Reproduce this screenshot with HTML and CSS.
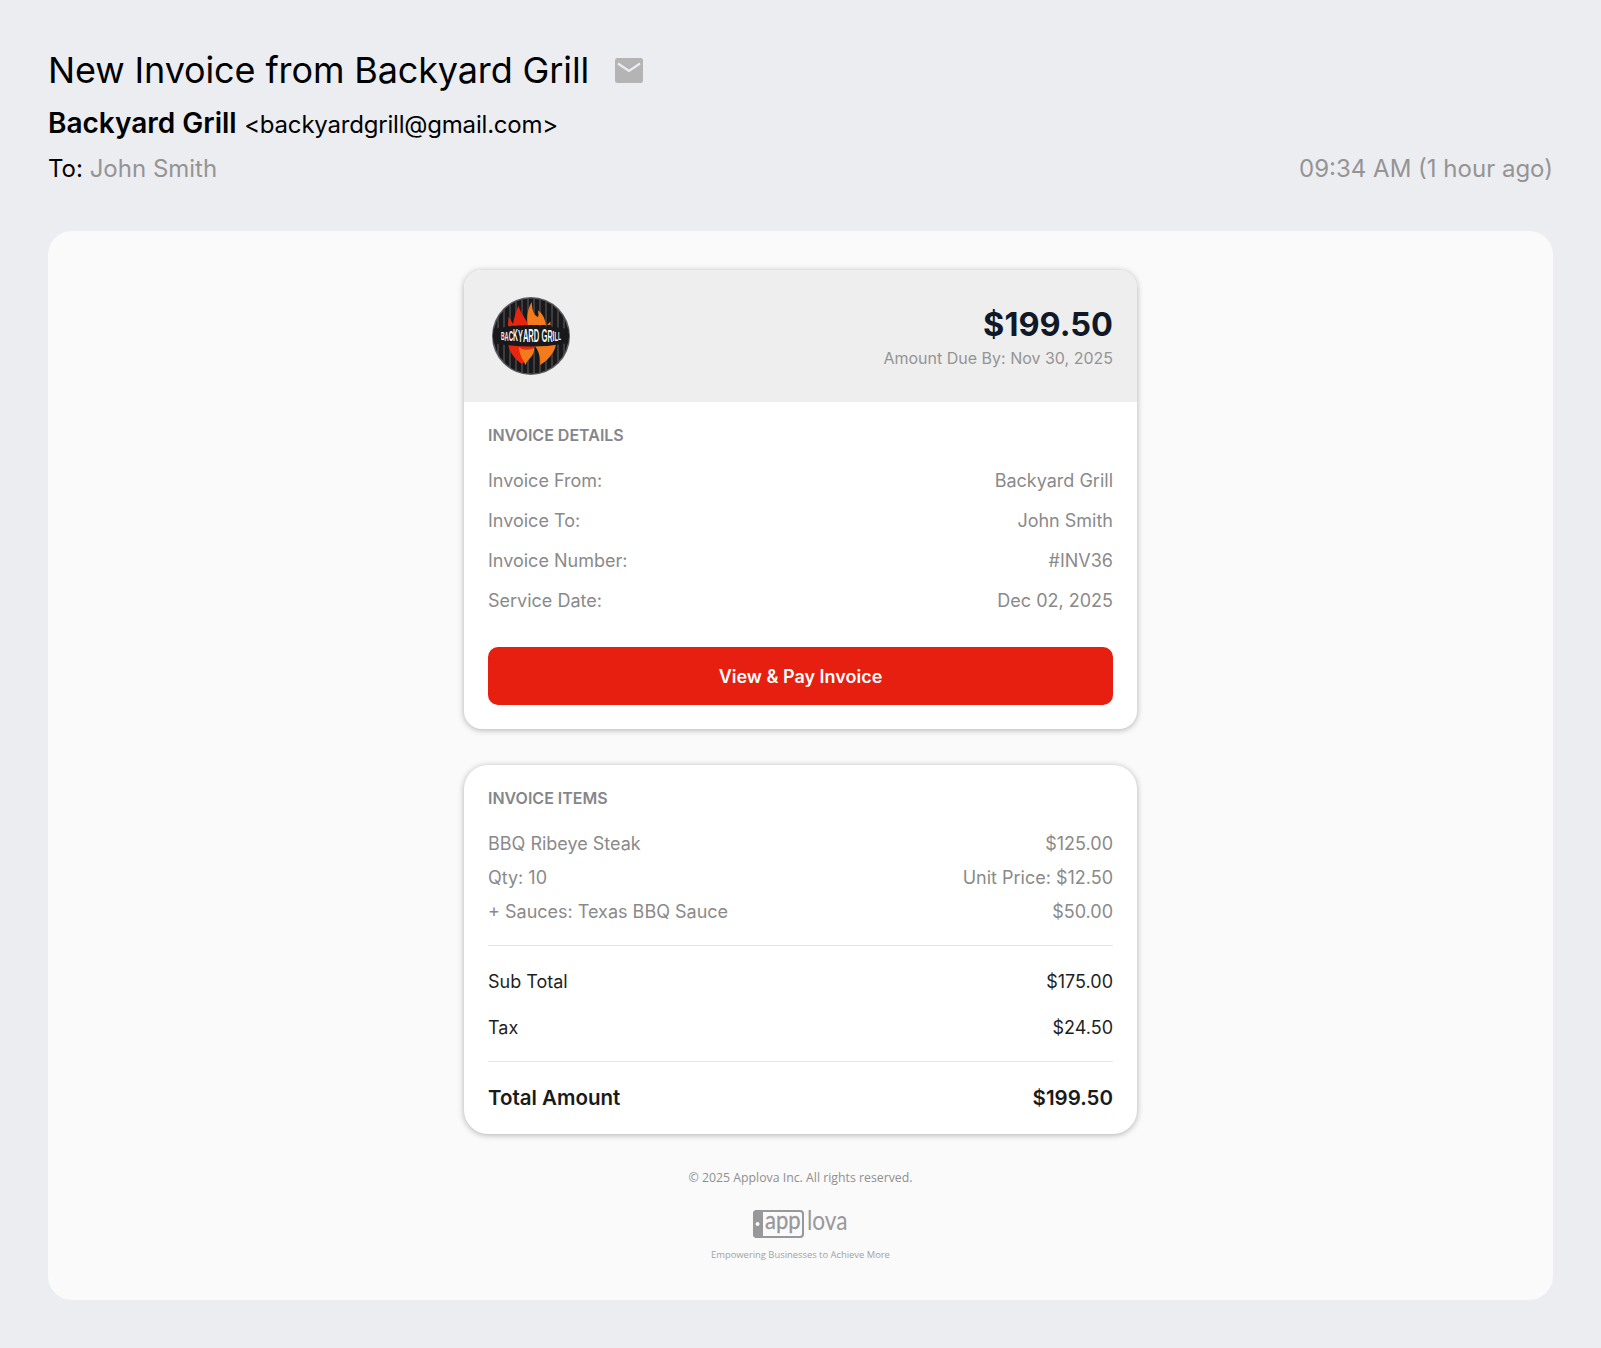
FILE: index.html
```html
<!DOCTYPE html>
<html lang="en">
<head>
  <meta charset="UTF-8">
  <title>New Invoice from Backyard Grill</title>
  <meta name="viewport" content="width=device-width, initial-scale=1.0">
  <link rel="stylesheet" href="styles.css">
</head>
<body>
<div class="mail-head">
  <div class="subject">
    <h1>New Invoice from Backyard Grill</h1>
    <svg class="mail-icon" width="28" height="25" viewBox="0 0 28 25">
      <rect width="28" height="25" rx="2.5" fill="#b4b4b4"/>
      <path d="M3 5.5 L14 13 L25 5.5" fill="none" stroke="#ecedf1" stroke-width="2.2"/>
    </svg>
  </div>
  <div class="sender"><b>Backyard Grill</b> <span>&lt;backyardgrill@gmail.com&gt;</span></div>
  <div class="to-row">
    <div>To: <span class="muted">John Smith</span></div>
    <div class="muted">09:34 AM (1 hour ago)</div>
  </div>
</div>

<div class="panel">
  <div class="card">
    <div class="card-top">
      <svg class="logo" width="80" height="80" viewBox="0 0 80 80">
        <defs><clipPath id="disc"><circle cx="40" cy="40" r="38"/></clipPath></defs>
        <circle cx="40" cy="40" r="39" fill="#5c5c60"/>
        <circle cx="40" cy="40" r="37.5" fill="#19191c"/>
        <g clip-path="url(#disc)">
          <path class="grill" d="M7 0V80M13 0V80M19 0V80M25 0V80M31 0V80M37 0V80M43 0V80M49 0V80M55 0V80M61 0V80M67 0V80M73 0V80"/>
          <path d="M17 30 L17.5 21 C20 24 21 26 22 28 C23 22 25 16 27.5 9.5 C29 16 34 22 38 29 Z" fill="#e8260f"/>
          <path d="M37 29 C35 22 37 12 40.7 6 C41 12 42 19 47 21 C48 19 47 16 47 14.5 C51 17 54 22 55 29 Z" fill="#f57a1c"/>
          <path d="M56 29 L59.5 25.5 L59.5 29 Z" fill="#f57a1c"/>
          <path d="M17 48 L44 50 C42 56 37 60 31 68 C25 64 19 58 17 48 Z" fill="#e8260f"/>
          <path d="M28 51 C32 55 38 54 43 52 C44 60 37 62 34.5 69 C32 64 28 58 28 51 Z" fill="#f57a1c"/>
          <path d="M44 50 L65 48.5 C63 58 56 65 49 69 C50 62 48 56 44 50 Z" fill="#f57a1c"/>
          <path d="M2 33 Q40 26 78 33 V47 Q40 54 2 47 Z" fill="#19191c"/>
        </g>
        <g transform="translate(0,-22.8) scale(1,2.3)">
          <text class="logo-text" x="40" y="29.1" text-anchor="middle"><tspan font-size="5">B</tspan><tspan font-size="5.6" dy="0.2">A</tspan><tspan font-size="6.2" dy="0.2">C</tspan><tspan font-size="6.8" dy="0.2">K</tspan><tspan font-size="7.3" dy="0.2">Y</tspan><tspan font-size="7.6" dy="0.1">A</tspan><tspan font-size="7.6" dy="0">R</tspan><tspan font-size="7.6" dy="0">D</tspan><tspan font-size="7.6" dy="0"> </tspan><tspan font-size="7.6" dy="0">G</tspan><tspan font-size="7.2" dy="-0.15">R</tspan><tspan font-size="6.6" dy="-0.2">I</tspan><tspan font-size="5.8" dy="-0.25">L</tspan><tspan font-size="5" dy="-0.3">L</tspan></text>
        </g>
      </svg>
      <div class="due">
        <div class="amount">$199.50</div>
        <div class="due-date">Amount Due By: Nov 30, 2025</div>
      </div>
    </div>
    <div class="card-body">
      <div class="label">INVOICE DETAILS</div>
      <div class="detail-row"><span>Invoice From:</span><span>Backyard Grill</span></div>
      <div class="detail-row"><span>Invoice To:</span><span>John Smith</span></div>
      <div class="detail-row"><span>Invoice Number:</span><span>#INV36</span></div>
      <div class="detail-row"><span>Service Date:</span><span>Dec 02, 2025</span></div>
      <a class="pay-btn" href="#">View &amp; Pay Invoice</a>
    </div>
  </div>

  <div class="card items">
    <div class="label">INVOICE ITEMS</div>
    <div class="item-row"><span>BBQ Ribeye Steak</span><span>$125.00</span></div>
    <div class="item-row"><span>Qty: 10</span><span>Unit Price: $12.50</span></div>
    <div class="item-row"><span>+ Sauces: Texas BBQ Sauce</span><span>$50.00</span></div>
    <div class="sums">
      <div class="sum-row"><span>Sub Total</span><span>$175.00</span></div>
      <div class="sum-row"><span>Tax</span><span>$24.50</span></div>
    </div>
    <div class="total-row"><span>Total Amount</span><span>$199.50</span></div>
  </div>

  <div class="foot">
    <div class="copy">© 2025 Applova Inc. All rights reserved.</div>
    <svg class="brand" width="96" height="40" viewBox="0 -9 96 40">
      <rect x="1" y="1" width="49" height="26" rx="3" fill="none" stroke="#98989a" stroke-width="2"/>
      <path d="M0 4 a4 4 0 0 1 4 -4 h6 v28 h-6 a4 4 0 0 1 -4 -4 Z" fill="#98989a"/>
      <circle cx="4.5" cy="14" r="2" fill="#fafafa"/>
      <g transform="translate(12,18.5) scale(1,1.15)"><text class="brand-text bold">app</text></g>
      <g transform="translate(54,20) scale(1.03,1.2)"><text class="brand-text">lova</text></g>
    </svg>
    <div class="tagline">Empowering Businesses to Achieve More</div>
  </div>
</div>
</body>
</html>
```

FILE: styles.css
```css
body, html {
  margin: 0;
  padding: 0;
  font-family: 'Inter', sans-serif;
  background-color: #ecedf1;
  color: #000;
}
.mail-head {
  padding: 48px 48px 0 48px;
}
.subject {
  display: flex;
  align-items: center;
  gap: 26px;
  height: 44px;
}
.subject h1 {
  margin: 0;
  font-size: 36px;
  line-height: 44px;
  font-weight: 400;
  letter-spacing: -0.13px;
}
.mail-icon {
  display: block;
}
.sender {
  margin-top: 13px;
  line-height: 36px;
  font-size: 24px;
  letter-spacing: -0.2px;
}
.sender b {
  font-size: 28px;
  font-weight: 600;
  letter-spacing: 0;
  margin-right: 1px;
}
.to-row {
  display: flex;
  justify-content: space-between;
  margin-top: 9px;
  font-size: 24px;
  line-height: 34px;
}
.muted {
  color: #949494;
}
.panel {
  margin: 45px 48px 48px 48px;
  padding: 39px 0 38px 0;
  height: 992px;
  background: #fafafa;
  border-radius: 24px;
}
.card {
  width: 673px;
  margin: 0 auto;
  background: #fff;
  border-radius: 18px;
  box-shadow: 0 1px 6px rgba(0, 0, 0, 0.3);
  overflow: hidden;
}
.card-top {
  display: flex;
  justify-content: space-between;
  align-items: center;
  height: 132px;
  padding: 0 24px 0 27px;
  background: #eeeeee;
}
.logo {
  display: block;
}
.grill {
  stroke: #47474b;
  stroke-width: 1.6;
  fill: none;
}
.logo-text {
  font-family: 'Liberation Sans', sans-serif;
  font-weight: 700;
  fill: #f4f4f4;
}
.due {
  text-align: right;
}
.amount {
  margin-top: 2px;
  font-size: 32.5px;
  line-height: 40px;
  font-weight: 700;
  color: #111827;
}
.due-date {
  margin-top: 2px;
  font-size: 16px;
  line-height: 22px;
  color: #949494;
}
.card-body {
  padding: 23px 24px 24px 24px;
}
.label {
  font-size: 16px;
  line-height: 20px;
  font-weight: 600;
  color: #85868a;
}
.detail-row {
  display: flex;
  justify-content: space-between;
  margin-top: 16px;
  font-size: 18px;
  line-height: 24px;
  color: #8a8a8a;
}
.label + .detail-row {
  margin-top: 24px;
}
.pay-btn {
  display: block;
  margin-top: 34px;
  height: 58px;
  line-height: 60px;
  text-align: center;
  background: #e61f10;
  border-radius: 10px;
  color: #fff;
  font-size: 18px;
  font-weight: 600;
  text-decoration: none;
}
.items {
  margin-top: 36px;
  padding: 23px 24px 22px 24px;
  box-sizing: border-box;
  border-radius: 24px;
}
.item-row {
  display: flex;
  justify-content: space-between;
  margin-top: 10px;
  font-size: 18px;
  line-height: 24px;
  color: #8a8a8a;
}
.label + .item-row {
  margin-top: 24px;
}
.sums {
  margin-top: 21px;
  padding: 13px 0 10px 0;
  border-top: 1px solid #e5e5e5;
  border-bottom: 1px solid #e5e5e5;
}
.sum-row {
  display: flex;
  justify-content: space-between;
  padding: 10px 0;
  font-size: 18px;
  line-height: 26px;
  color: #1f1f1f;
}
.total-row {
  display: flex;
  justify-content: space-between;
  margin-top: 22px;
  font-size: 20.5px;
  line-height: 28px;
  font-weight: 600;
  color: #1a1a1a;
}
.foot {
  margin-top: 35px;
  text-align: center;
}
.copy {
  font-family: 'Open Sans', sans-serif;
  font-size: 12.3px;
  line-height: 18px;
  color: #8f8f8f;
}
.brand {
  display: block;
  margin: 14px auto 0 auto;
}
.brand-text {
  font-family: 'Lato', sans-serif;
  font-size: 22px;
  fill: #98989a;
}
.brand-text.bold {
  stroke: #98989a;
  stroke-width: 0.3;
}
.tagline {
  margin-top: 6px;
  font-family: 'Open Sans', sans-serif;
  font-size: 9.4px;
  line-height: 16px;
  color: #a2a2a2;
}
```
